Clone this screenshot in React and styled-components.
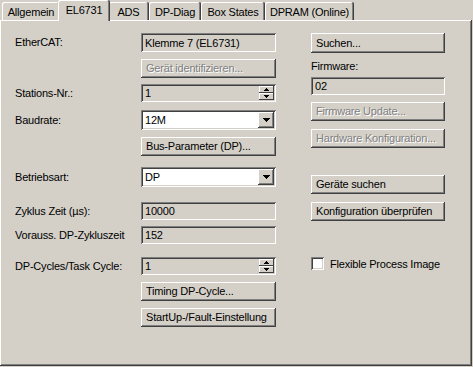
import React from "react";
import styled, { createGlobalStyle } from "styled-components";

const Global = createGlobalStyle`
  html, body { margin: 0; padding: 0; background: #d4d0c8; }
  body { font-family: "Liberation Sans", Arial, sans-serif; font-size: 11px; letter-spacing: -0.2px; color: #000; }
`;

const Window = styled.div`
  width: 473px;
  height: 367px;
  background: #d4d0c8;
  position: relative;
  overflow: hidden;
`;

const TabStrip = styled.div`
  display: flex;
  align-items: flex-end;
  height: 20px;
  padding-left: 2px;
  position: relative;
  z-index: 2;
`;

const Tab = styled.div`
  box-sizing: border-box;
  width: ${(p) => (p.$sel ? p.$w + 4 : p.$w)}px;
  height: ${(p) => (p.$sel ? 21 : 18)}px;
  margin: ${(p) => (p.$sel ? "0 -2px -1px -2px" : "0")};
  background: #d4d0c8;
  border-radius: 2px 2px 0 0;
  box-shadow: inset -1px 0 #404040, inset 1px 1px #fff, inset -2px 0 #808080;
  display: flex;
  align-items: center;
  justify-content: center;
  padding-top: ${(p) => (p.$sel ? 0 : 1)}px;
  padding-bottom: ${(p) => (p.$sel ? 2 : 0)}px;
  position: relative;
  z-index: ${(p) => (p.$sel ? 3 : 1)};
  white-space: nowrap;
`;

const Panel = styled.div`
  box-sizing: border-box;
  width: 472px;
  height: 346px;
  background: #d4d0c8;
  box-shadow: inset -1px -1px #404040, inset 1px 1px #fff, inset -2px -2px #808080;
  display: flex;
  padding: 13px 0 0 15px;
  position: relative;
  z-index: 1;
`;

const Column = styled.div`
  display: flex;
  flex-direction: column;
  margin-left: ${(p) => p.$ml || 0}px;
`;

const Row = styled.div`
  display: flex;
  align-items: center;
  margin-top: ${(p) => p.$mt || 0}px;
`;

const Label = styled.div`
  width: ${(p) => p.$w || 126}px;
  white-space: nowrap;
  line-height: 13px;
`;

const Field = styled.div`
  box-sizing: border-box;
  width: ${(p) => p.$w || 135}px;
  height: ${(p) => p.$h || 18}px;
  background: ${(p) => (p.$white ? "#fff" : "#d4d0c8")};
  box-shadow: inset 1px 1px #808080, inset -1px -1px #fff, inset 2px 2px #404040,
    inset -2px -2px #d4d0c8;
  padding: 0 2px 0 4px;
  display: flex;
  align-items: center;
  white-space: nowrap;
`;

const FieldText = styled.span`
  flex: 1;
`;

const Button = styled.div`
  box-sizing: border-box;
  width: ${(p) => p.$w || 135}px;
  height: ${(p) => p.$h || 19}px;
  background: #d4d0c8;
  box-shadow: inset -1px -1px #404040, inset 1px 1px #fff, inset -2px -2px #808080;
  padding: 0 4px 1px 5px;
  display: flex;
  align-items: center;
  white-space: nowrap;
  color: ${(p) => (p.$disabled ? "#808080" : "#000")};
  text-shadow: ${(p) => (p.$disabled ? "1px 1px 0 #fff" : "none")};
`;

const Spin = styled.div`
  display: flex;
  flex-direction: column;
  width: 15px;
  height: 14px;
`;

const SpinBtn = styled.div`
  flex: 1;
  background: #d4d0c8;
  box-shadow: inset -1px -1px #404040, inset 1px 1px #fff;
  display: flex;
  align-items: center;
  justify-content: center;
`;

const DropBtn = styled.div`
  box-sizing: border-box;
  width: 16px;
  height: 16px;
  background: #d4d0c8;
  box-shadow: inset -1px -1px #404040, inset 1px 1px #fff, inset -2px -2px #808080;
  display: flex;
  align-items: center;
  justify-content: center;
`;

const Check = styled.div`
  box-sizing: border-box;
  width: 13px;
  height: 13px;
  background: #fff;
  box-shadow: inset 1px 1px #808080, inset -1px -1px #fff, inset 2px 2px #404040,
    inset -2px -2px #d4d0c8;
  margin-right: 6px;
`;

const Arrow = ({ dir = "down", w = 5, h = 3 }) => (
  <svg width={w} height={h} viewBox={`0 0 ${w} ${h}`} shapeRendering="crispEdges">
    <polygon
      points={dir === "down" ? `0,0 ${w},0 ${w / 2},${h}` : `0,${h} ${w},${h} ${w / 2},0`}
      fill="#000"
    />
  </svg>
);

const Spinner = () => (
  <Spin>
    <SpinBtn>
      <Arrow dir="up" w={5} h={3} />
    </SpinBtn>
    <SpinBtn>
      <Arrow dir="down" w={5} h={3} />
    </SpinBtn>
  </Spin>
);

const Combo = ({ value }) => (
  <Field $white $h={20}>
    <FieldText>{value}</FieldText>
    <DropBtn>
      <Arrow dir="down" w={7} h={4} />
    </DropBtn>
  </Field>
);

const tabs = [
  { t: "Allgemein", w: 58 },
  { t: "EL6731", w: 48, sel: true },
  { t: "ADS", w: 41 },
  { t: "DP-Diag", w: 52 },
  { t: "Box States", w: 64 },
  { t: "DPRAM (Online)", w: 89 },
];

export default function App() {
  return (
    <>
      <Global />
      <Window>
        <TabStrip>
          {tabs.map((x) => (
            <Tab key={x.t} $w={x.w} $sel={x.sel}>
              {x.t}
            </Tab>
          ))}
        </TabStrip>
        <Panel>
          <Column>
            <Row>
              <Label>EtherCAT:</Label>
              <Field $h={19}>Klemme 7 (EL6731)</Field>
            </Row>
            <Row $mt={7}>
              <Label />
              <Button $disabled>Gerät identifizieren...</Button>
            </Row>
            <Row $mt={6}>
              <Label>Stations-Nr.:</Label>
              <Field>
                <FieldText>1</FieldText>
                <Spinner />
              </Field>
            </Row>
            <Row $mt={8}>
              <Label>Baudrate:</Label>
              <Combo value="12M" />
            </Row>
            <Row $mt={7}>
              <Label />
              <Button>Bus-Parameter (DP)...</Button>
            </Row>
            <Row $mt={11}>
              <Label>Betriebsart:</Label>
              <Combo value="DP" />
            </Row>
            <Row $mt={15}>
              <Label>Zyklus Zeit (µs):</Label>
              <Field>10000</Field>
            </Row>
            <Row $mt={6}>
              <Label>Vorauss. DP-Zykluszeit</Label>
              <Field>152</Field>
            </Row>
            <Row $mt={13}>
              <Label>DP-Cycles/Task Cycle:</Label>
              <Field>
                <FieldText>1</FieldText>
                <Spinner />
              </Field>
            </Row>
            <Row $mt={7}>
              <Label />
              <Button>Timing DP-Cycle...</Button>
            </Row>
            <Row $mt={7}>
              <Label />
              <Button>StartUp-/Fault-Einstellung</Button>
            </Row>
          </Column>
          <Column $ml={35}>
            <Button $w={134} $h={20}>Suchen...</Button>
            <Row $mt={7}>
              <Label>Firmware:</Label>
            </Row>
            <Row $mt={4}>
              <Field $w={134}>02</Field>
            </Row>
            <Row $mt={7}>
              <Button $w={134} $disabled>Firmware Update...</Button>
            </Row>
            <Row $mt={8}>
              <Button $w={134} $disabled>Hardware Konfiguration...</Button>
            </Row>
            <Row $mt={27}>
              <Button $w={134}>Geräte suchen</Button>
            </Row>
            <Row $mt={8}>
              <Button $w={134}>Konfiguration überprüfen</Button>
            </Row>
            <Row $mt={36}>
              <Check />
              <span>Flexible Process Image</span>
            </Row>
          </Column>
        </Panel>
      </Window>
    </>
  );
}
